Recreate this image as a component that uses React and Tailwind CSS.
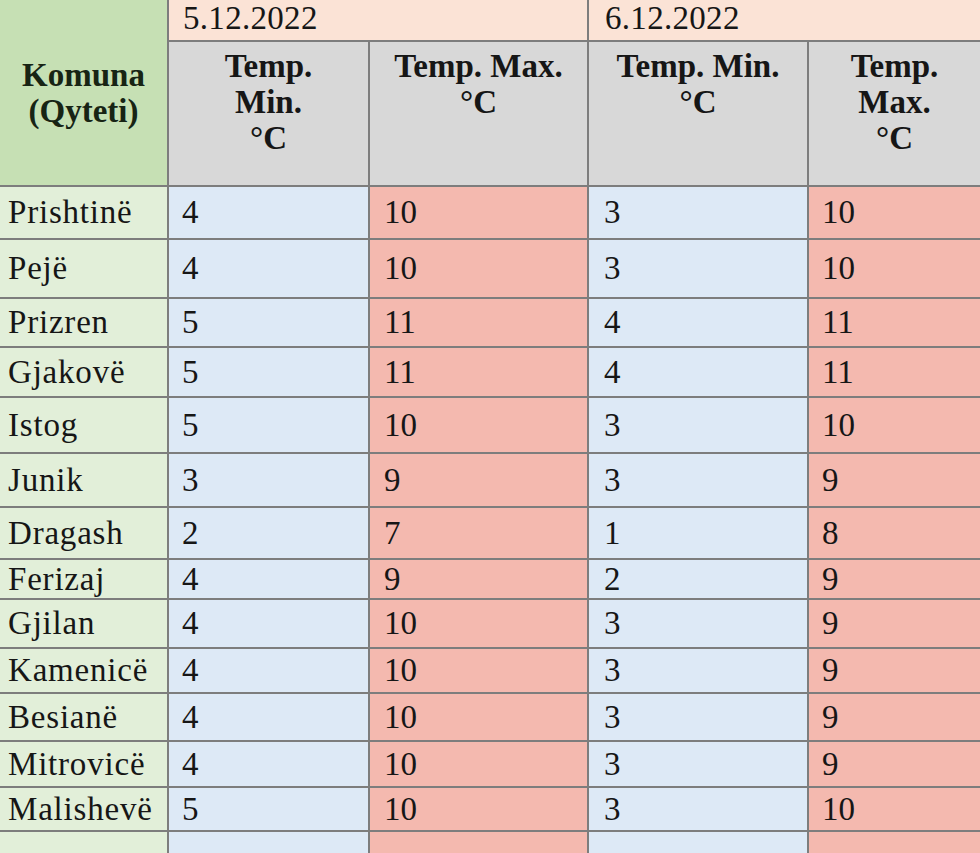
import React from 'react';

const rows = [
  { name: 'Prishtinë', h: 'h-[51px]', v: [4, 10, 3, 10] },
  { name: 'Pejë', h: 'h-[57px]', v: [4, 10, 3, 10] },
  { name: 'Prizren', h: 'h-[47px]', v: [5, 11, 4, 11] },
  { name: 'Gjakovë', h: 'h-[48px]', v: [5, 11, 4, 11] },
  { name: 'Istog', h: 'h-[54px]', v: [5, 10, 3, 10] },
  { name: 'Junik', h: 'h-[52px]', v: [3, 9, 3, 9] },
  { name: 'Dragash', h: 'h-[50px]', v: [2, 7, 1, 8] },
  { name: 'Ferizaj', h: 'h-[38px]', v: [4, 9, 2, 9] },
  { name: 'Gjilan', h: 'h-[47px]', v: [4, 10, 3, 9] },
  { name: 'Kamenicë', h: 'h-[43px]', v: [4, 10, 3, 9] },
  { name: 'Besianë', h: 'h-[46px]', v: [4, 10, 3, 9] },
  { name: 'Mitrovicë', h: 'h-[44px]', v: [4, 10, 3, 9] },
  { name: 'Malishevë', h: 'h-[42px]', v: [5, 10, 3, 10] },
];

const minBg = 'bg-[#dde9f6]';
const maxBg = 'bg-[#f4b9af]';

export default function App() {
  return (
    <div className="w-[980px] h-[853px] overflow-hidden bg-[#7d7d7d] text-[#161616]" style={{ fontFamily: '"Liberation Serif", "Times New Roman", serif' }}>
      <div className="grid grid-cols-[167px_199px_217px_218px_171px] gap-[2px]">
        {/* header */}
        <div className="row-span-2 bg-[#c6e0b4] flex flex-col items-center justify-center text-[33px] font-bold leading-[36px] text-[#172414]">
          <span>Komuna</span>
          <span>(Qyteti)</span>
        </div>
        <div className="col-span-2 h-[40px] bg-[#fbe3d6] flex items-center pl-[14px] pb-[4px] text-[33px] leading-none tracking-[0.3px]">5.12.2022</div>
        <div className="col-span-2 h-[40px] bg-[#fbe3d6] flex items-center pl-[16px] pb-[4px] text-[33px] leading-none tracking-[0.3px]">6.12.2022</div>

        <div className="h-[143px] bg-[#d8d8d8] flex flex-col items-center pt-[6px] text-[33px] font-bold leading-[36px]">
          <span>Temp.</span>
          <span>Min.</span>
          <span>°C</span>
        </div>
        <div className="bg-[#d8d8d8] flex flex-col items-center pt-[6px] text-[33px] font-bold leading-[36px]">
          <span>Temp. Max.</span>
          <span>°C</span>
        </div>
        <div className="bg-[#d8d8d8] flex flex-col items-center pt-[6px] text-[33px] font-bold leading-[36px]">
          <span>Temp. Min.</span>
          <span>°C</span>
        </div>
        <div className="bg-[#d8d8d8] flex flex-col items-center pt-[6px] text-[33px] font-bold leading-[36px]">
          <span>Temp.</span>
          <span>Max.</span>
          <span>°C</span>
        </div>

        {rows.map((r) => (
          <React.Fragment key={r.name}>
            <div className={`${r.h} bg-[#e2efd9] flex items-center pl-[8px] text-[33px] leading-none tracking-[0.8px]`}>{r.name}</div>
            <div className={`${minBg} flex items-center pl-[13px] text-[33px] leading-none`}>{r.v[0]}</div>
            <div className={`${maxBg} flex items-center pl-[14px] text-[33px] leading-none`}>{r.v[1]}</div>
            <div className={`${minBg} flex items-center pl-[15px] text-[33px] leading-none`}>{r.v[2]}</div>
            <div className={`${maxBg} flex items-center pl-[13px] text-[33px] leading-none`}>{r.v[3]}</div>
          </React.Fragment>
        ))}

        <div className="h-[30px] bg-[#e2efd9]"></div>
        <div className={minBg}></div>
        <div className={maxBg}></div>
        <div className={minBg}></div>
        <div className={maxBg}></div>
      </div>
    </div>
  );
}
